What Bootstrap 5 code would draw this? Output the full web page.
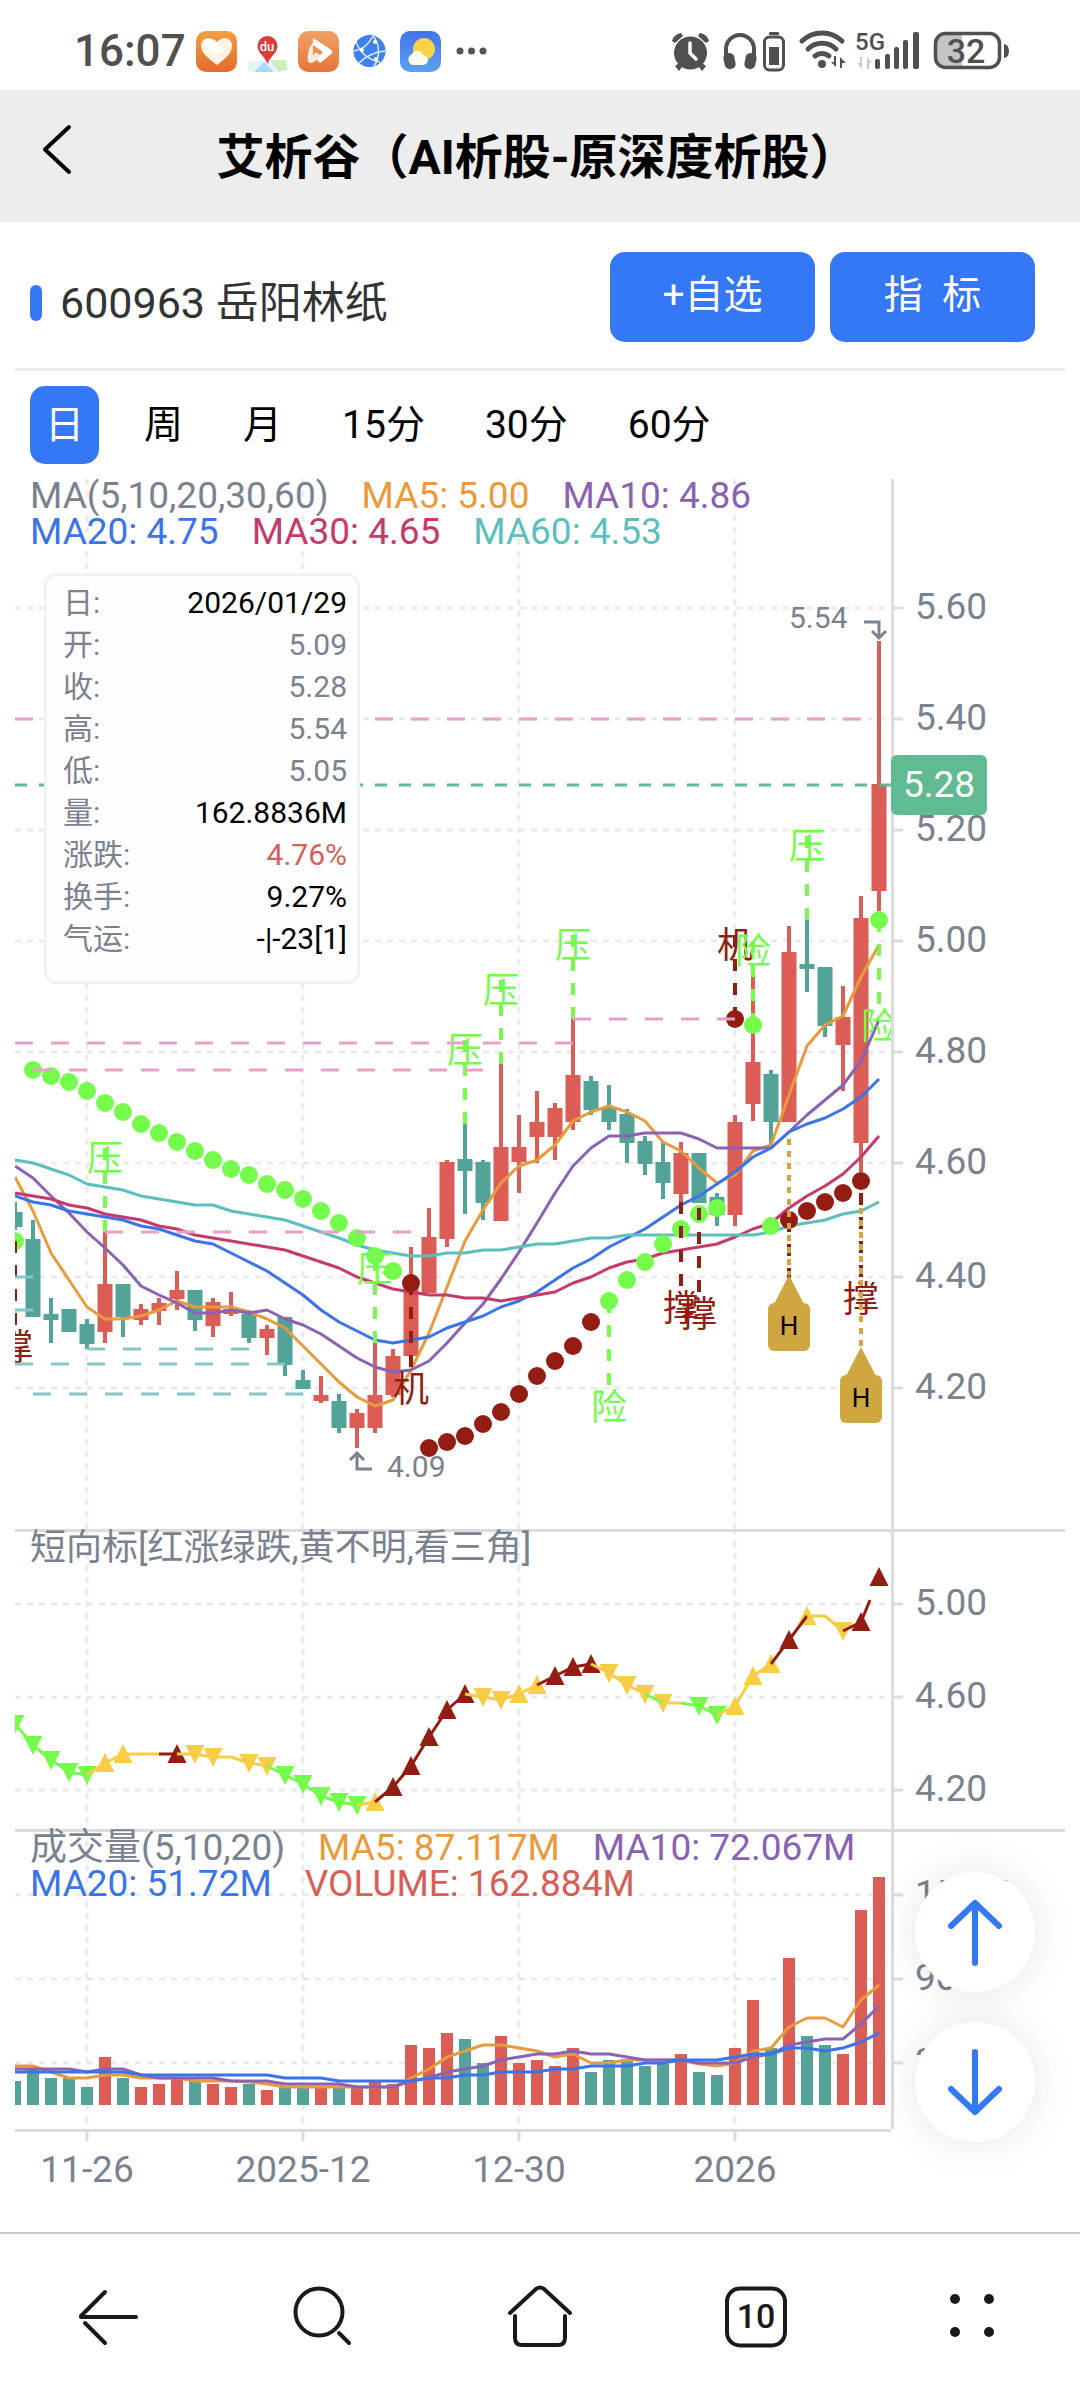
<!DOCTYPE html>
<html lang="zh-CN">
<head>
<meta charset="utf-8">
<meta name="viewport" content="width=device-width, initial-scale=1">
<title>艾析谷（AI析股-原深度析股）</title>
<link href="https://cdn.jsdelivr.net/npm/bootstrap@5.3.0/dist/css/bootstrap.min.css" rel="stylesheet">
<style>
:root { --brand: #3478f6; --axis: #7a828f; --up: #db5d55; --down: #53a398; --lime: #75fb4c; --wine: #931d13; --gold: #d0a641; }
body { font-family: Roboto, "Noto Sans CJK SC", sans-serif; color: #000; background: #fff; }
.status-bar { height: 90px; padding: 12px 70px 0 74px; }
.status-time { font-size: 44px; line-height: 54px; font-weight: 500; color: #505050; }
.title-bar { height: 132px; background: #ededed; }
.title-bar h1 { font-size: 48px; line-height: 72px; font-weight: 700; padding: 3px 6px 0 0; }
.back-btn { left: 24px; top: 27px; width: 66px; height: 66px; }
.content-area { padding: 0 15px; }
.stock-row { padding: 30px 30px 26px 15px; border-bottom: 3px solid #ececec; }
.stock-id { padding-top: 11px; }
.stock-mark { width: 12px; height: 36px; border-radius: 6px; background: var(--brand); }
.stock-name { font-size: 43px; line-height: 54px; color: #333; margin-left: 18px; }
.action-group { gap: 15px; }
.action-btn { width: 205px; height: 90px; border-radius: 15px; font-size: 39px; line-height: 54px; padding: 0 0 4px; background: var(--brand); color: #fff; border: 0; }
.period-tabs { padding: 15px 15px 13px; gap: 30px; }
.period-tabs .nav-link { height: 78px; padding: 12px 15px; font-size: 39px; line-height: 54px; color: #000; border-radius: 15px; }
.period-tabs .nav-link.active { background: var(--brand); color: #fff; }
.legend-line { top: 1px; left: 15px; width: 862px; max-width: 82%; column-gap: 33px; font-size: 37px; line-height: 36px; color: var(--axis); }
.legend-line.cjk-only { font-size: 36px; }
.c-ma5 { color: #e99a3c; } .c-ma10 { color: #8a62b3; } .c-ma20 { color: #3a74e8; }
.c-ma30 { color: #c43a6d; } .c-ma60 { color: #5cbfbd; } .c-vol { color: #d65f57; }
.quote-card { top: 96px; left: 29px; width: 316px; padding: 6px 10px 21px 16px; border: 3px solid #f1f2f5; border-radius: 12px; background: #fefefe; font-size: 30px; line-height: 42px; }
.quote-card dt { font-weight: 400; color: var(--axis); }
.q-dim { color: var(--axis); }
.q-up { color: #d65f57; }
.page-fabs { right: 30px; top: 43px; gap: 30px; }
.fab-btn { width: 120px; height: 120px; border-radius: 50%; border: 0; background: #fff; box-shadow: 0 0 42px rgba(40,60,55,.13); padding: 0; }
.tick-text { font-size: 37px; fill: var(--axis); }
.note-text { font-size: 30px; fill: var(--axis); }
.signal-text { font-size: 36px; text-anchor: middle; }
.flag-text { font-size: 26px; text-anchor: middle; fill: #000; }
.browser-bar { height: 168px; border-top: 2px solid #cbcbcb; }
.browser-bar .btn { padding: 0; border: 0; }
.ico-text { font-family: Roboto, sans-serif; font-weight: 500; text-anchor: middle; }
</style>
</head>
<body class="d-flex flex-column min-vh-100">

<header>
  <div class="status-bar d-flex align-items-center justify-content-between">
    <div class="d-flex align-items-center">
      <span class="status-time">16:07</span>
      <svg class="ms-2" width="300" height="42" viewBox="195 30 300 42" aria-hidden="true">
        <defs>
          <linearGradient id="gHeart" x2="0" y2="1"><stop stop-color="#f0a045"/><stop offset="1" stop-color="#e66a2c"/></linearGradient>
          <linearGradient id="gPlay" x2="0" y2="1"><stop stop-color="#f0a365"/><stop offset="1" stop-color="#e8743a"/></linearGradient>
          <linearGradient id="gSky" x2="0" y2="1"><stop stop-color="#4272ee"/><stop offset="1" stop-color="#5aa2f2"/></linearGradient>
        </defs>
        <rect x="197" y="31" width="41" height="41" rx="10" fill="url(#gHeart)"/>
        <path d="M218 65C209 58 202 53 202 46c0-9 11-10 16-4 5-6 15-5 15 4 0 7-6 12-15 19z" fill="#fff3e6"/>
        <path d="M203 43c3-6 11-5 15 0l7 7c-4 5-8 5-12 1z" fill="#fff"/>
        <path d="M250 61h38l1 10h-41z" fill="#e2f2fb"/><path d="M272 60h15l1 9-9 3z" fill="#cdeec1"/><path d="M255 72l10-10 10 10z" fill="#a9dbf6"/>
        <path d="M268.500 64c-2-7-10-11-10-18a10 10 0 0 1 20 0c0 7-8 11-10 18z" fill="#df3a38"/>
        <text x="268" y="51" font-size="13" fill="#fff" class="ico-text">du</text>
        <rect x="299" y="31" width="41" height="41" rx="10" fill="url(#gPlay)"/>
        <path d="M314 38l17 11c3 2 3 4 0 6l-10 8-4-4 7-7-10-7z" fill="#fff"/><path d="M314 43v13l-5 6c-1-6 0-14 5-19z" fill="#fff" opacity=".85"/><path d="M309 61l8-9 5 4-7 6c-3 2-5 1-6-1z" fill="#ffe8d6"/>
        <circle cx="370.500" cy="51" r="16" fill="#3f80ee"/>
        <g fill="none" stroke="#dcecff" stroke-width="1.500"><path d="M355 51c6-1 14-5 19-15M374 36c6 6 8 20 1 30M357 42c4 10 12 18 24 20M360 63c6-6 16-11 26-12"/></g>
        <circle cx="376" cy="42" r="2" fill="#fff"/><circle cx="363" cy="50" r="2" fill="#fff"/><circle cx="377" cy="59" r="2" fill="#fff"/>
        <rect x="401" y="31" width="41" height="41" rx="10" fill="url(#gSky)"/>
        <circle cx="425" cy="49" r="11" fill="#fbd247"/><path d="M413 65a6 6 0 0 1 0-11 6 6 0 0 1 11 1 5 5 0 0 1 0 10z" fill="#fffbe9"/>
        <g fill="#555"><circle cx="461" cy="51" r="3.500"/><circle cx="472.500" cy="51" r="3.500"/><circle cx="484" cy="51" r="3.500"/></g>
      </svg>
    </div>
    <svg width="340" height="42" viewBox="670 30 340 42" aria-hidden="true">
      <g fill="#505050">
        <circle cx="690.500" cy="53" r="16.500"/><path d="M672 41c1-4 4-7 9-8l2 3-8 7zM709 41c-1-4-4-7-9-8l-2 3 8 7zM675 66l4-3 3 4-3 4zM706 66l-4-3-3 4 3 4z"/>
        <path d="M690 43v10l6 6" fill="none" stroke="#fff" stroke-width="3.500" stroke-linecap="round"/>
        <path d="M726 57v-8a14 14 0 0 1 28 0v8" fill="none" stroke="#505050" stroke-width="4"/>
        <rect x="724" y="53" width="11" height="16" rx="5" transform="rotate(-12 730 61)"/><rect x="745" y="53" width="11" height="16" rx="5" transform="rotate(12 750 61)"/>
        <rect x="764.500" y="37" width="19" height="33" rx="5" fill="none" stroke="#505050" stroke-width="3"/><rect x="769" y="47" width="10" height="18"/><rect x="769" y="32" width="10" height="3" rx="1"/>
        <g fill="none" stroke="#505050" stroke-width="5" stroke-linecap="round"><path d="M802 41a29 29 0 0 1 40 0M808 49a20 20 0 0 1 28 0M815 56a11 11 0 0 1 14 0"/></g>
        <circle cx="822" cy="64" r="4"/><path d="M836 56v11l-5-5h3v-6zM840 68V57l6 6h-4v5z"/>
        <text x="870" y="50" font-size="24" class="ico-text">5G</text>
        <path d="M862 57v12l-5-6h3v-6zM867 69V57l5 6h-3v6z" fill="#c9c9c9"/>
        <rect x="875" y="59" width="5" height="10" rx="2"/><rect x="885" y="54" width="5" height="15" rx="2"/><rect x="894" y="47" width="5" height="22" rx="2"/><rect x="903" y="40" width="5" height="29" rx="2"/><rect x="913" y="32" width="6" height="37" rx="2"/>
        <path d="M945 34h17v34h-17q-9 0-9-9V43q0-9 9-9z" fill="#c4c4c4"/><rect x="935.500" y="33.500" width="64" height="34" rx="10" fill="none" stroke="#505050" stroke-width="3.500"/>
        <path d="M1004 44q5 1 5 7t-5 7z"/>
        <text x="966" y="63" font-size="34" class="ico-text">32</text>
      </g>
    </svg>
  </div>
  <div class="title-bar d-flex align-items-center justify-content-center position-relative">
    <button type="button" class="btn border-0 p-0 back-btn position-absolute" aria-label="返回">
      <svg width="66" height="66" viewBox="24 117 66 66" fill="none" stroke="#000" stroke-width="4" stroke-linecap="round" stroke-linejoin="round"><path d="M69 127L45 149.500 69 172"/></svg>
    </button>
    <h1 class="m-0">艾析谷（AI析股-原深度析股）</h1>
  </div>
</header>

<main class="content-area">
  <div class="stock-row d-flex">
    <div class="stock-id d-flex align-items-center me-auto">
      <span class="stock-mark"></span>
      <span class="stock-name">600963 岳阳林纸</span>
    </div>
    <div class="action-group d-flex">
      <button type="button" class="btn action-btn">+自选</button>
      <button type="button" class="btn action-btn">指&nbsp;&nbsp;标</button>
    </div>
  </div>

  <nav class="nav period-tabs" aria-label="周期">
    <a class="nav-link active" href="#d">日</a>
    <a class="nav-link" href="#w">周</a>
    <a class="nav-link" href="#m">月</a>
    <a class="nav-link" href="#m15">15分</a>
    <a class="nav-link" href="#m30">30分</a>
    <a class="nav-link" href="#m60">60分</a>
  </nav>

  <section class="position-relative">
    <svg id="priceChart" class="d-block w-100" viewBox="15 477 1050 1052"></svg>
    <div class="legend-line position-absolute d-flex flex-wrap">
      <span>MA(5,10,20,30,60)</span><span class="c-ma5">MA5: 5.00</span><span class="c-ma10">MA10: 4.86</span><span class="c-ma20">MA20: 4.75</span><span class="c-ma30">MA30: 4.65</span><span class="c-ma60">MA60: 4.53</span>
    </div>
    <dl class="quote-card position-absolute m-0">
      <div class="d-flex justify-content-between"><dt>日:</dt><dd class="m-0">2026/01/29</dd></div>
      <div class="d-flex justify-content-between"><dt>开:</dt><dd class="m-0 q-dim">5.09</dd></div>
      <div class="d-flex justify-content-between"><dt>收:</dt><dd class="m-0 q-dim">5.28</dd></div>
      <div class="d-flex justify-content-between"><dt>高:</dt><dd class="m-0 q-dim">5.54</dd></div>
      <div class="d-flex justify-content-between"><dt>低:</dt><dd class="m-0 q-dim">5.05</dd></div>
      <div class="d-flex justify-content-between"><dt>量:</dt><dd class="m-0">162.8836M</dd></div>
      <div class="d-flex justify-content-between"><dt>涨跌:</dt><dd class="m-0 q-up">4.76%</dd></div>
      <div class="d-flex justify-content-between"><dt>换手:</dt><dd class="m-0">9.27%</dd></div>
      <div class="d-flex justify-content-between"><dt>气运:</dt><dd class="m-0">-|-23[1]</dd></div>
    </dl>
  </section>

  <section class="position-relative">
    <svg id="trendChart" class="d-block w-100" viewBox="15 1529 1050 300"></svg>
    <div class="legend-line cjk-only position-absolute"><span>短向标[红涨绿跌,黄不明,看三角]</span></div>
  </section>

  <section class="position-relative">
    <svg id="volumeChart" class="d-block w-100" viewBox="15 1829 1050 370"></svg>
    <div class="legend-line position-absolute d-flex flex-wrap">
      <span>成交量(5,10,20)</span><span class="c-ma5">MA5: 87.117M</span><span class="c-ma10">MA10: 72.067M</span><span class="c-ma20">MA20: 51.72M</span><span class="c-vol">VOLUME: 162.884M</span>
    </div>
    <div class="page-fabs position-absolute d-flex flex-column">
      <button type="button" class="fab-btn" aria-label="上一个"><svg width="120" height="120" viewBox="0 0 120 120" fill="none" stroke="#3478f6" stroke-width="6" stroke-linecap="round" stroke-linejoin="round"><path d="M60 91V31M36 54L60 31 84 54"/></svg></button>
      <button type="button" class="fab-btn" aria-label="下一个"><svg width="120" height="120" viewBox="0 0 120 120" fill="none" stroke="#3478f6" stroke-width="6" stroke-linecap="round" stroke-linejoin="round"><path d="M60 30V90M36 67L60 90 84 67"/></svg></button>
    </div>
  </section>
</main>

<nav class="browser-bar mt-auto d-flex align-items-center" aria-label="浏览器">
  <button type="button" class="btn flex-fill" aria-label="后退"><svg width="72" height="72" viewBox="72 2281 72 72" fill="none" stroke="#1a1a1a" stroke-width="4" stroke-linecap="round"><path d="M81 2317H136M81 2316L105 2292M85 2323L105 2343"/></svg></button>
  <button type="button" class="btn flex-fill" aria-label="搜索"><svg width="72" height="72" viewBox="288 2281 72 72" fill="none" stroke="#1a1a1a" stroke-width="4" stroke-linecap="round"><circle cx="319" cy="2312" r="23.500"/><path d="M339 2333L349 2343"/></svg></button>
  <button type="button" class="btn flex-fill" aria-label="主页"><svg width="72" height="72" viewBox="504 2281 72 72" fill="none" stroke="#1a1a1a" stroke-width="4" stroke-linecap="round" stroke-linejoin="round"><path d="M510 2313L536 2289Q540 2286 544 2289L570 2313M515 2316V2338Q515 2345 522 2345H558Q565 2345 565 2338V2316"/></svg></button>
  <button type="button" class="btn flex-fill" aria-label="标签页"><svg width="72" height="72" viewBox="720 2281 72 72"><rect x="727" y="2288.500" width="58" height="57" rx="13" fill="none" stroke="#1a1a1a" stroke-width="4"/><text x="756" y="2328" font-size="34" class="ico-text" fill="#1a1a1a">10</text></svg></button>
  <button type="button" class="btn flex-fill" aria-label="菜单"><svg width="72" height="72" viewBox="936 2281 72 72" fill="#1a1a1a"><circle cx="955" cy="2299" r="5"/><circle cx="989" cy="2299" r="5"/><circle cx="955" cy="2332" r="5"/><circle cx="989" cy="2332" r="5"/></svg></button>
</nav>

<script src="https://cdn.jsdelivr.net/npm/bootstrap@5.3.0/dist/js/bootstrap.bundle.min.js"></script>
<script>
// Chart coordinates: one bar every 18 units, the plot runs from x = 15 to x = 891.
const X = i => 15 + 18 * i;
const RED = '#db5d55', GREEN = '#53a398', LIME = '#75fb4c', WINE = '#931d13', GOLD = '#d0a641', YELLOW = '#f8cd46';
const line = (x1, y1, x2, y2, c, w, dash) => `<line x1="${x1}" y1="${y1}" x2="${x2}" y2="${y2}" stroke="${c}" stroke-width="${w}"${dash ? ` stroke-dasharray="${dash}"` : ''}/>`;
const poly = (ys, c) => `<polyline fill="none" stroke="${c}" stroke-width="3" stroke-linejoin="round" points="${ys.map((y, i) => X(i) + ',' + y).join(' ')}"/>`;
const gridColor = '#ebebeb', ruleColor = '#dcdcdc';
function frame(top, bottom, levels) {
  let s = '';
  for (const x of [87, 303, 519, 735]) s += line(x, top, x, bottom, gridColor, 3, '6 6');
  for (const [y, label] of levels) {
    s += line(15, y, 891, y, gridColor, 3, '6 6') + line(894, y, 903, y, ruleColor, 3);
    s += `<text class="tick-text" x="915" y="${y + 11}">${label}</text>`;
  }
  return s + line(892.5, top, 892.5, bottom, ruleColor, 3);
}
const clip = (id, y, h) => `<clipPath id="${id}"><rect x="15" y="${y}" width="876" height="${h}"/></clipPath>`;

// colour, high, body top, body bottom, low
const candles = [
['g',1202,1212,1227,1230],['g',1220,1239,1317,1317],['g',1298,1314,1320,1343],['g',1309,1309,1332,1332],['g',1319,1324,1344,1349],
['r',1232,1284,1332,1343],['g',1284,1284,1317,1337],['r',1304,1309,1320,1325],['r',1298,1303,1311,1325],['r',1271,1290,1299,1310],
['g',1290,1290,1320,1331],['r',1298,1302,1326,1337],['r',1292,1309,1314,1316],['g',1310,1314,1338,1343],['r',1325,1329,1338,1355],
['g',1317,1317,1365,1376],['g',1370,1380,1389,1389],['r',1376,1395,1401,1403],['g',1394,1401,1428,1433],['r',1409,1413,1428,1448],
['r',1343,1395,1428,1433],['r',1349,1356,1395,1397],['r',1247,1284,1356,1356],['r',1208,1237,1293,1293],['r',1160,1162,1239,1247],
['g',1124,1159,1171,1214],['g',1160,1162,1203,1220],['r',1064,1147,1221,1221],['r',1115,1147,1162,1193],['r',1091,1122,1137,1163],
['r',1103,1108,1137,1160],['r',1019,1075,1122,1130],['g',1076,1081,1110,1115],['g',1085,1107,1122,1130],['g',1109,1114,1143,1163],
['g',1136,1141,1164,1175],['g',1143,1162,1183,1199],['r',1142,1153,1194,1203],['g',1153,1153,1203,1203],['g',1193,1197,1215,1226],
['r',1115,1122,1215,1226],['r',974,1062,1104,1121],['g',1070,1074,1122,1144],['r',926,952,1122,1122],['g',920,964,969,992],
['g',967,967,1026,1037],['r',986,1017,1045,1091],['r',896,918,1143,1172],['r',641,784,891,911]];
const ma5 = [1177,1211,1253,1280,1307,1319,1319,1316,1310,1301,1307,1307,1307,1312,1319,1328,1346,1364,1382,1397,1406,1400,1370,1333,1287,1241,1210,1183,1166,1160,1145,1121,1112,1106,1112,1121,1142,1151,1168,1183,1175,1151,1145,1095,1046,1025,1016,977,945];
const ma10 = [1166,1178,1196,1213,1232,1248,1265,1286,1295,1303,1313,1313,1310,1313,1310,1319,1325,1334,1346,1358,1367,1372,1370,1361,1343,1323,1304,1279,1252,1223,1193,1166,1148,1136,1136,1133,1133,1133,1139,1148,1148,1148,1148,1132,1115,1100,1085,1061,1020];
const ma20 = [1196,1202,1205,1211,1214,1217,1220,1226,1229,1235,1241,1244,1253,1262,1271,1283,1295,1310,1322,1331,1340,1343,1340,1337,1328,1322,1316,1307,1301,1292,1280,1268,1259,1247,1238,1229,1217,1205,1196,1184,1172,1157,1148,1132,1124,1118,1109,1097,1079];
const ma30 = [1193,1196,1199,1205,1208,1214,1217,1220,1226,1229,1235,1238,1241,1244,1247,1250,1256,1262,1268,1277,1283,1289,1292,1295,1295,1298,1298,1301,1298,1295,1292,1283,1277,1268,1262,1259,1253,1250,1247,1244,1237,1229,1223,1208,1196,1186,1174,1157,1136];
const ma60 = [1160,1163,1169,1175,1184,1187,1190,1196,1199,1202,1205,1205,1211,1214,1217,1220,1226,1232,1238,1245,1250,1253,1256,1256,1253,1253,1250,1250,1247,1244,1244,1241,1238,1238,1235,1235,1235,1235,1235,1235,1235,1235,1232,1226,1223,1220,1214,1211,1202];
const sar = [1241,1070,1076,1082,1091,1103,1112,1124,1133,1142,1151,1160,1169,1175,1184,1190,1199,1211,1223,1238,1256,1271,1283,1448,1442,1436,1424,1412,1394,1376,1361,1346,1322,1301,1280,1262,1244,1229,1214,1208,1019,1025,1226,1220,1211,1202,1193,1181,920];
const sarRed = i => (i >= 22 && i <= 32) || i === 40 || (i >= 43 && i <= 47);

function signal(i, y, dir, ch, c) {
  const start = dir < 0 ? y - 84 : y, mid = dir < 0 ? y - 75 : y + 105;
  return line(X(i), start, X(i), start + 84, c, 4, '12 12') + `<text class="signal-text" x="${X(i)}" y="${mid + 14}" fill="${c}">${ch}</text>`;
}
function flag(i, from, tip) {
  const x = X(i);
  return line(x, from, x, tip, GOLD, 4, '6 6') + `<path d="M${x} ${tip}L${x + 15} ${tip + 29}H${x - 15}z" fill="${GOLD}"/><rect x="${x - 21}" y="${tip + 28}" width="42" height="48" rx="6" fill="${GOLD}"/><text class="flag-text" x="${x}" y="${tip + 60}">H</text>`;
}
let s = clip('clipPrice', 477, 1052) + frame(479, 1529, [[608,'5.60'],[719,'5.40'],[830,'5.20'],[941,'5.00'],[1052,'4.80'],[1163,'4.60'],[1277,'4.40'],[1388,'4.20']]);
s += '<g clip-path="url(#clipPrice)">';
candles.forEach(([k, h, t, b, l], i) => {
  const c = k === 'r' ? RED : GREEN;
  s += line(X(i), h, X(i), l, c, 4) + `<rect x="${X(i) - 7.5}" y="${t}" width="15" height="${b - t}" fill="${c}"/>`;
});
s += poly(ma5, '#e99a3c') + poly(ma10, '#8a62b3') + poly(ma20, '#3a74e8') + poly(ma30, '#c43a6d') + poly(ma60, '#5cbfbd');
s += '<text class="note-text" x="789" y="628">5.54</text><text class="note-text" x="387" y="1477">4.09</text>';
s += '<g fill="none" stroke="#7a828f" stroke-width="3"><path d="M864 622H879V638M872 631L879 638 886 631"/><path d="M372 1469H357V1453M350 1460L357 1453 364 1460"/></g>';
sar.forEach((y, i) => s += `<circle cx="${X(i)}" cy="${y}" r="9" fill="${sarRed(i) ? WINE : LIME}"/>`);
for (const [i, y] of [[5,1232],[20,1343],[25,1124],[27,1064],[31,1019],[44,920]]) s += signal(i, y, -1, '压', LIME);
s += signal(40, 1019, -1, '机', WINE) + signal(41, 1025, -1, '险', LIME) + signal(22, 1283, 1, '机', WINE);
s += signal(33, 1301, 1, '险', LIME) + signal(48, 920, 1, '险', LIME);
for (const [i, y] of [[0,1241],[37,1202],[38,1208],[47,1193]]) s += signal(i, y, 1, '撑', WINE);
s += line(X(43), 1220, X(43), 1280, WINE, 4, '12 12') + flag(43, 1139, 1275) + flag(47, 1208, 1347);
for (const [y, a, b] of [[719,15,861],[1043,15,573],[1070,33,483],[1232,105,411],[1019,573,735]]) s += line(a, y, b, y, '#e99fc8', 3, '18 18');
for (const [y, a, b] of [[1277,15,33],[1310,15,33],[1349,87,249],[1364,15,285],[1394,33,303]]) s += line(a, y, b, y, '#86c6c6', 3, '18 18');
s += line(15, 785, 879, 785, '#61bb92', 3, '12 12') + line(879, 785, 891, 785, '#61bb92', 3) + '</g>';
s += '<rect x="891" y="755" width="96" height="60" rx="6" fill="#61bb92"/><text class="tick-text" x="903" y="797" style="fill:#fff">5.28</text>';
document.getElementById('priceChart').innerHTML = s;

// value, marker: u/d = triangle up/down, then the colour letter
const trend = [[1724,'dg'],[1745,'dg'],[1760,'dg'],[1772,'dg'],[1775,'dg'],[1763,'uy'],[1754,'uy'],[1754],[1754],[1754,'uw'],[1754,'dy'],[1757,'dy'],[1757],[1763,'dy'],[1766,'dy'],[1775,'dg'],[1784,'dg'],[1796,'dg'],[1802,'dg'],[1805,'dg'],[1802,'uy'],[1787,'uw'],[1766,'uw'],[1737,'uw'],[1710,'uw'],[1694,'uw'],[1697,'dy'],[1700,'dy'],[1694,'uy'],[1685,'uy'],[1676,'uw'],[1667,'uw'],[1664,'uw'],[1673,'dy'],[1685,'dy'],[1694,'dy'],[1703,'dy'],[1703],[1706,'dg'],[1715,'dg'],[1706,'uy'],[1676,'uy'],[1664,'uy'],[1640,'uw'],[1616,'uy'],[1616],[1631,'dy'],[1622,'uw'],[1577,'uw']];
const segs = 'ggggyyyywyyyyygggggywwwwwyyyywwwyyygyggyyywwyyww';
const pal = { g: LIME, y: YELLOW, w: WINE };
s = clip('clipTrend', 1529, 300) + frame(1529, 1829, [[1604,'5.00'],[1697,'4.60'],[1790,'4.20']]) + line(15, 1530.5, 1065, 1530.5, ruleColor, 3) + '<g clip-path="url(#clipTrend)">';
trend.forEach(([y, m], i) => {
  if (!m) return;
  const x = X(i), k = m[0] === 'u' ? 1 : -1;
  s += `<path d="M${x - 9.5} ${y + 9 * k}H${x + 9.5}L${x} ${y - 10 * k}z" fill="${pal[m[1]]}"/>`;
});
[...segs].forEach((c, i) => {
  const last = i === 47;
  s += line(X(i), trend[i][0], last ? X(i) + 9 : X(i + 1), last ? 1600 : trend[i + 1][0], pal[c], 3);
});
document.getElementById('trendChart').innerHTML = s + '</g>';

const volume = 'g2081 g2069 g2078 g2078 g2087 r2057 g2078 r2087 r2084 r2078 g2080 r2084 r2087 g2084 r2090 g2087 g2087 r2087 g2087 r2087 r2082 r2084 r2045 r2048 r2033 g2039 g2063 r2036 r2063 r2060 r2066 r2048 g2072 g2060 g2059 g2066 g2064 r2054 g2072 g2075 r2048 r2000 g2048 r1958 g2036 g2045 r2054 r1910 r1877'.split(' ');
const v5 = [2066,2066,2072,2078,2078,2075,2075,2078,2078,2078,2081,2081,2081,2082,2084,2087,2087,2087,2087,2087,2087,2087,2078,2069,2057,2051,2045,2045,2048,2051,2057,2054,2063,2063,2060,2060,2060,2060,2064,2066,2063,2051,2048,2027,2018,2018,2027,2000,1985];
const v10 = [2069,2069,2069,2069,2072,2069,2069,2075,2078,2078,2078,2078,2081,2081,2081,2084,2084,2084,2084,2087,2087,2087,2081,2078,2072,2069,2066,2060,2057,2054,2054,2051,2054,2054,2057,2060,2060,2060,2063,2063,2063,2057,2054,2045,2042,2039,2039,2024,2006];
const v20 = [2072,2072,2072,2072,2072,2072,2072,2075,2075,2075,2075,2075,2075,2075,2075,2078,2078,2078,2081,2081,2081,2081,2081,2078,2078,2075,2075,2072,2072,2072,2069,2069,2066,2066,2066,2063,2063,2060,2060,2060,2057,2054,2054,2048,2048,2051,2048,2042,2033];
s = clip('clipVolume', 1829, 302) + frame(1829, 2129, [[1895,'150M'],[1979,'90M'],[2063,'30M']]) + line(15, 1830.5, 1065, 1830.5, ruleColor, 3) + '<g clip-path="url(#clipVolume)">';
volume.forEach((v, i) => s += `<rect x="${X(i) - 6}" y="${v.slice(1)}" width="12" height="${2105 - v.slice(1)}" fill="${v[0] === 'r' ? RED : GREEN}"/>`);
s += poly(v5, '#e99a3c') + poly(v10, '#8a62b3') + poly(v20, '#3a74e8') + '</g>' + line(15, 2130.5, 891, 2130.5, ruleColor, 3);
for (const [x, t] of [[87,'11-26'],[303,'2025-12'],[519,'12-30'],[735,'2026']]) s += line(x, 2132, x, 2141, ruleColor, 3) + `<text class="tick-text" text-anchor="middle" x="${x}" y="2182">${t}</text>`;
document.getElementById('volumeChart').innerHTML = s;
</script>
</body>
</html>
